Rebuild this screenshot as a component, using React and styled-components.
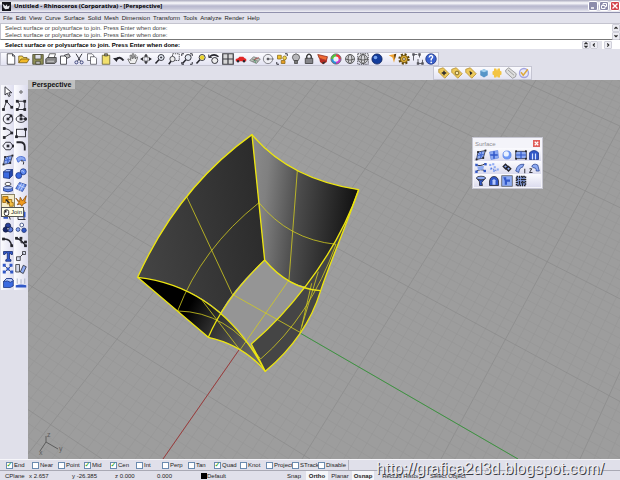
import React, { useState } from 'react';
import styled, { createGlobalStyle } from 'styled-components';

const MENUS = ['File', 'Edit', 'View', 'Curve', 'Surface', 'Solid', 'Mesh', 'Dimension', 'Transform', 'Tools', 'Analyze', 'Render', 'Help'];

const MAIN_TOOLS = [
  'new', 'open', 'save', 'print', 'properties', 'cut', 'copy', 'paste',
  'undo', 'pan', 'rotate', 'zoom', 'zoomWindow', 'zoomExtents', 'zoomSelected', 'undoView',
  'viewports', 'car', 'cplane', 'circleCenter', 'selectAll', 'bulb', 'lock', 'layers',
  'colorWheel', 'globe', 'globeBox', 'render', 'spot', 'gear', 'dimension', 'help',
];

const TAG_TOOLS = ['tagMove', 'tagCircle', 'tagPoint', 'smallCube', 'star', 'tagEmpty', 'check'];

const SIDE_TOOLS = [
  'pointer', 'point', 'polyline', 'controlCurve', 'circle', 'ellipse', 'arc', 'rectangle',
  'polygon', 'fillet', 'surface', 'bend', 'cube', 'spheres', 'cylinder', 'mesh',
  'join', 'explode', 'trim', 'split', 'boolean', 'group', 'curveEdit', 'pointsOn',
  'text', 'move', 'array', 'align', 'solid', 'project',
];

const SURFACE_TOOLS = [
  'surface', 'patch', 'sphere', 'plane', 'extrude',
  'loft', 'scatter', 'network', 'sweep1', 'sweep2',
  'revolve', 'rail', 'heightfield', 'pointGrid',
];

const OSNAPS = ['End', 'Near', 'Point', 'Mid', 'Cen', 'Int', 'Perp', 'Tan', 'Quad', 'Knot', 'Project', 'STrack', 'Disable'];

const K = '#25252c';
const B = '#3158c8';
const L = '#8eabf3';

const line = { fill: 'none', stroke: K, strokeWidth: 1.2 };

const dots = (points, color = K, r = 1.2) =>
  points.map(([x, y]) => <rect key={`${x}-${y}`} x={x - r} y={y - r} width={r * 2} height={r * 2} fill={color} />);

const tag = (
  <path d="M1 3 L7 1 L15 9 L9 15 L1 7Z" fill="#ecc95c" stroke="#b28a2c" />
);

const lens = (
  <g {...line}>
    <circle cx="9.5" cy="6" r="4" fill="#e4e9f2" />
    <path d="M6.5 9 L2 14" strokeWidth="2" />
  </g>
);

const globe = (
  <g fill="none" stroke="#555" strokeWidth="1.2">
    <circle cx="8" cy="8" r="6" fill="#d8d8dc" />
    <ellipse cx="8" cy="8" rx="2.6" ry="6" />
    <path d="M2 8 Q8 11 14 8" />
  </g>
);

const ICONS = {
  new: <path d="M3 1 H10 L13 4 V15 H3Z M10 1 V4 H13" fill="#fff" stroke={K} />,
  open: <g stroke="#6f5410"><path d="M1 13 V4 H6 L7 6 H12 V8" fill="#f9d95a" /><path d="M1 13 L4 8 H15 L12 13Z" fill="#f2b927" /></g>,
  save: <g stroke="#43432c"><path d="M1 2 H15 V15 H1Z" fill="#8f8f55" /><path d="M4 2 H12 V8 H4Z" fill="#dfe0ea" /><path d="M5 11 H11 V15 H5Z" fill="#bbb" /></g>,
  print: <g stroke="#333"><path d="M4 7 L6 1 H14 L12 7Z" fill="#fff" /><path d="M1 8 L3 6 H15 V12 L13 14 H1Z" fill="#888" /><path d="M3 11 H12" stroke="#ddd" /></g>,
  properties: <g stroke={K} fill="#fff"><path d="M2 4 H10 V15 H2Z" /><path d="M7 3 L13 1 L15 5 L11 7 L9 5Z" fill="#bbb" /></g>,
  cut: <g {...line}><path d="M4 1 L10 11 M12 1 L6 11" /><circle cx="4.5" cy="12.5" r="2" stroke="#313a74" /><circle cx="11.5" cy="12.5" r="2" stroke="#313a74" /></g>,
  copy: <g fill="#fff" stroke="#4d4d55"><path d="M2 1 H8 L10 3 V10 H2Z" /><path d="M6 5 H12 L14 7 V15 H6Z" /></g>,
  paste: <g stroke="#55502c"><path d="M3 3 H13 V15 H3Z" fill="#f2e06c" /><path d="M6 1 H10 V4 H6Z" fill="#888" /></g>,
  undo: <g><path d="M4 9 Q9 3 14 10" fill="none" stroke={K} strokeWidth="2.6" /><path d="M0 7 L7 6 L5 12Z" fill={K} /></g>,
  pan: <path d="M4 14 L1 8 L3 8 L5 10 L4 3 L6 3 L7 8 L7 1 L9 1 L9 7 L11 2 L12 3 L11 8 L14 5 L14 7 L11 14Z" fill="#eee" stroke="#555" />,
  rotate: <g strokeWidth="1"><ellipse cx="8" cy="8" rx="6.5" ry="2.6" fill="none" stroke="#777" /><ellipse cx="8" cy="8" rx="2.6" ry="6.5" fill="none" stroke="#888" /><path d="M8 1 L6 5 H10Z M8 15 L6 11 H10Z M0 8 L4 6 V10Z M16 8 L12 6 V10Z" fill={K} /></g>,
  zoom: <g>{lens}<path d="M8 6 H11 M9.5 4.5 V7.5" stroke={K} /></g>,
  zoomWindow: <g><rect x="6" y="1" width="9" height="9" fill="none" stroke={K} strokeDasharray="2 1" /><circle cx="6" cy="8" r="3.5" fill="#eee" stroke={K} /><path d="M4 11 L1 15" stroke={K} strokeWidth="2" /></g>,
  zoomExtents: <g>{lens}<path d="M1 4 V1 H4 M12 1 H15 V4 M15 12 V15 H12 M4 15 H1 V12" {...line} /></g>,
  zoomSelected: <g>{lens}<circle cx="9.5" cy="6" r="3" fill="#ecd52c" /></g>,
  undoView: <g {...line}><circle cx="9" cy="10" r="4" fill="#eee" /><path d="M2 5 Q8 0 14 5" strokeWidth="2" /><path d="M1 2 V6 H5" /></g>,
  viewports: <path d="M1 1 H15 V15 H1Z M8 1 V15 M1 8 H15" fill="#d7d7d7" stroke="#3c3c42" strokeWidth="1.6" />,
  car: <g><path d="M1 8 L4 7 L6 5 H11 L13 7 L15 8 V11 H1Z" fill="#e12626" /><circle cx="4" cy="11" r="1.6" fill={K} /><circle cx="12" cy="11" r="1.6" fill={K} /></g>,
  cplane: <g fill="none" stroke="#777"><path d="M1 10 L6 5 L15 8 L10 14Z M4 8 L12 11 M10 6 L5 12" fill="#b9c3b9" /><path d="M7 9 L13 6" stroke="#b33" /><path d="M7 9 L9 13" stroke="#385" /></g>,
  circleCenter: <g fill="none" stroke="#65656c"><circle cx="8" cy="8" r="6.2" fill="#efeff4" /><circle cx="8" cy="8" r="1.4" fill={K} /><path d="M8 8 H16" /></g>,
  selectAll: <g><path d="M1 15 V12 M1 15 H4 M12 1 H15 V4" {...line} /><path d="M2 3 H7 V8 H2Z" fill="#efc22e" stroke="#8b6a14" /><circle cx="11.5" cy="6.5" r="2.5" fill="#f2d651" stroke="#8b6a14" /><path d="M7 10 H12 V14 H7Z" fill="#e59b23" stroke="#8b6a14" /></g>,
  bulb: <g stroke="#444"><path d="M5 10 Q2 6 4 3 Q8 -1 12 3 Q14 6 11 10Z" fill="#b7b7ba" /><path d="M6 10 H10 V14 H6Z" fill="#777" /></g>,
  lock: <g stroke="#333"><path d="M5 8 V4 Q8 -1 11 4 V8" fill="none" strokeWidth="1.8" /><path d="M3 7 H13 V14 H3Z" fill="#85858a" /></g>,
  layers: <g><path d="M1 2 L14 5 L12 10 L3 7Z" fill="#f06a35" stroke="#882715" /><path d="M3 7 L12 10 L14 6 L13 12 L8 15 L4 12Z" fill="#b52a22" /><path d="M6 13 L12 11 L9 15Z" fill="#333" /></g>,
  colorWheel: <g fill="none" strokeWidth="3"><path d="M8 3 A5 5 0 0 1 13 8" stroke="#ef3939" /><path d="M13 8 A5 5 0 0 1 8 13" stroke="#c53ad0" /><path d="M8 13 A5 5 0 0 1 3 8" stroke="#2792de" /><path d="M3 8 A5 5 0 0 1 8 3" stroke="#53c83b" /><circle cx="8" cy="8" r="6.8" stroke="#333" strokeWidth="0.8" /></g>,
  globe,
  globeBox: <g>{globe}<rect x="1" y="1" width="14" height="14" fill="none" stroke={K} strokeDasharray="2 1" /></g>,
  render: <g><circle cx="8" cy="8" r="6.8" fill="#133c9c" /><circle cx="8" cy="8" r="6.8" fill="none" stroke="#0b1d55" /><circle cx="6" cy="6" r="2.4" fill="#79a4ef" /></g>,
  spot: <g><path d="M5 3 L15 1 L12 13 L10 6Z" fill="#efa332" /><path d="M12 2 L15 1 L13 9Z" fill="#5b3c12" /></g>,
  gear: <g><circle cx="8" cy="8" r="5.6" fill="none" stroke="#5c4308" strokeWidth="4" strokeDasharray="2.4 2" /><circle cx="8" cy="8" r="5" fill="#d9ab35" stroke="#5c4308" /><circle cx="8" cy="8" r="1.8" fill="#fff" stroke="#5c4308" /></g>,
  dimension: <g {...line} stroke="#55555c"><path d="M7 2 H2 V10 M10 2 V6 M8 8 V14 H14 V9" />{dots([[2, 2], [10, 2], [8, 14], [14, 14]], '#55555c', 1)}</g>,
  help: <g><circle cx="8" cy="8" r="7" fill="#3960cf" stroke="#20337a" /><path d="M5.5 6 Q6 3 8.5 3.3 Q12 5 8.3 8 V10" fill="none" stroke="#fff" strokeWidth="1.9" /><circle cx="8.3" cy="12.4" r="1.2" fill="#fff" /></g>,

  tagMove: <g>{tag}<path d="M5 8 H11 M8 5 V11" stroke={K} strokeWidth="1.8" /></g>,
  tagCircle: <g>{tag}<circle cx="8" cy="8" r="2.5" fill="#f8e8ac" stroke="#5c4308" /></g>,
  tagPoint: <g>{tag}<path d="M6 5 L10 8 L7 11Z" fill={K} /></g>,
  smallCube: <g><path d="M3 5 L8 3 L13 5 V11 L8 14 L3 11Z" fill="#5795c8" /><path d="M3 5 L8 3 L13 5 L8 7Z" fill="#a6d1ee" /></g>,
  star: <path d="M8 5 L9 2 H12 V5 L14 6 V10 L12 11 V14 H9 L8 12 L7 14 H4 V11 L2 10 V6 L4 5 V2 H7Z" fill="#f3c443" />,
  tagEmpty: <path d="M1 4 L5 1 L15 9 L14 13 L10 15 L1 7Z M4 4 L12 11" fill="#dedede" stroke="#888" />,
  check: <g fill="none"><circle cx="8" cy="8" r="6" fill="#e6e6f8" stroke="#a4a4e0" strokeWidth="1.8" /><path d="M4 7 L7 11 L13 3" stroke="#dda93c" strokeWidth="2" /></g>,

  pointer: <path d="M4 1 V12 L7 9.5 L9 14 L11 13 L9 9 H13Z" fill="#fff" stroke={K} strokeWidth="1.2" />,
  point: <circle cx="8" cy="8" r="1.6" fill="#fff" stroke={K} />,
  polyline: <g {...line}><path d="M2 14 L6 3 L13 11" />{dots([[2, 14], [6, 3], [13, 11]])}</g>,
  controlCurve: <g {...line}><path d="M3 3 H13 V14 H3 Q9 8 3 3" />{dots([[3, 3], [13, 3], [3, 14], [13, 14]])}</g>,
  circle: <g {...line}><circle cx="8" cy="8" r="6.3" /><path d="M8 8 L12 4" />{dots([[8, 8], [12, 4]])}</g>,
  ellipse: <g {...line}><ellipse cx="8" cy="8" rx="6.5" ry="4.5" /><path d="M8 3 V8 H14" />{dots([[8, 8], [8, 3], [14, 8]])}</g>,
  arc: <g {...line}><path d="M3 2 Q11 3 13 8 L3 14" />{dots([[3, 2], [13, 8], [3, 14]])}</g>,
  rectangle: <g {...line}><rect x="2" y="3" width="12" height="10" />{dots([[2, 13], [14, 3]])}</g>,
  polygon: <g {...line}><path d="M5 3 H11 L15 8 L11 13 H5 L1 8Z" />{dots([[8, 8], [15, 8]])}</g>,
  fillet: <g fill="none"><path d="M2 3 H7 Q13 3 13 9 V14" stroke={K} strokeWidth="2.4" /></g>,
  surface: <g><path d="M4 4 L14 2 L11 12 L2 14Z" fill={L} stroke={K} /><path d="M4 4 L11 12 M3 9 L12 7 M9 3 L7 13" stroke={B} />{dots([[4, 4], [14, 2], [11, 12], [2, 14]])}</g>,
  bend: <g><path d="M2 6 Q7 1 13 5 L14 9 L8 8 L4 11Z" fill={L} stroke={B} /><path d="M8 9 Q13 9 11 14" {...line} /></g>,
  cube: <g stroke="#18317e"><path d="M2 5 L10 5 V14 L2 13Z" fill="#3b6ae0" /><path d="M2 5 L6 2 H14 L10 5Z" fill="#a9c0fa" /><path d="M10 5 L14 2 V10 L10 14Z" fill="#2447ab" /></g>,
  spheres: <g stroke="#18317e"><circle cx="11" cy="5" r="4" fill="#5c86ec" /><circle cx="5" cy="10" r="4" fill="#3b6ae0" /><path d="M8 4 Q11 2 12 6" stroke="#cbd8fd" fill="none" /></g>,
  cylinder: <g stroke="#18317e"><path d="M2 9 V13 Q8 16 14 13 V9" fill="#5c86ec" /><ellipse cx="8" cy="9" rx="6" ry="2" fill="#c6d5fc" /><ellipse cx="8" cy="4" rx="4" ry="2.2" fill="#fff" stroke={K} /></g>,
  mesh: <g stroke="#28479e"><path d="M6 2 L15 5 L10 14 L1 10Z" fill="#6c92ee" /><path d="M9 3 L4 12 M12 4 L7 13 M4 5 L13 9" stroke="#d3defc" /></g>,
  join: <g stroke="#8b5c05"><path d="M1 2 H8 V7 H5 V10 H1Z" fill="#f3a823" /><path d="M8 6 H13 V10 H15 V15 H10 V12 H7 V9 H8Z" fill="#f6c044" /><path d="M5 6 L10 11" stroke={K} strokeWidth="1.8" /></g>,
  explode: <path d="M1 4 L6 9 L7 3 L10 8 L15 1 L13 9 L15 10 L11 12 L9 15 L7 12 L3 13 L5 10Z" fill="#f09b20" stroke="#8b4b05" />,
  trim: <g><path d="M7 2 L11 14" {...line} /><path d="M2 8 H8 V13 H2Z" fill={B} /></g>,
  split: <g><path d="M4 2 V14 M12 2 V14 M4 14 H14" {...line} /><path d="M6 4 H14 V11 H6Z" fill={B} /></g>,
  boolean: <g stroke="#101940"><circle cx="8" cy="5" r="3.5" fill="#27409b" /><circle cx="5" cy="10" r="3.5" fill="#17266b" /><circle cx="11" cy="10" r="3.5" fill="#5d7bda" /><circle cx="8" cy="9" r="1.5" fill="#fff" /></g>,
  group: <g stroke="#22346f"><circle cx="9" cy="4" r="2.5" fill="#fff" /><circle cx="4" cy="10" r="2.5" fill={L} /><circle cx="12" cy="11" r="3" fill={B} /></g>,
  curveEdit: <g {...line}><path d="M2 4 Q11 3 13 13" strokeWidth="2" />{dots([[2, 4], [13, 13]])}</g>,
  pointsOn: <g {...line}><path d="M2 3 Q9 5 14 13" strokeWidth="1.8" /><path d="M8 3 V9 H14" />{dots([[2, 3], [8, 3], [14, 13], [14, 8]])}</g>,
  text: <path d="M2 2 H14 V6 H12 L11 4 H10 V12 L12 13 V15 H5 V13 L7 12 V4 H5 L4 6 H2Z" fill={B} stroke="#14286c" />,
  move: <g><path d="M2 9 H7 V14 H2Z M10 2 H14 V6 H10Z" fill="#d4d9ea" stroke={K} /><path d="M7 9 L11 5" {...line} /></g>,
  array: <g><path d="M3 3 L13 13 M13 3 L3 13" stroke={K} />{dots([[3, 3], [12, 3], [8, 8], [3, 12], [13, 12]], B, 2)}</g>,
  align: <g stroke={K}><path d="M1 2 H6 V12 H1Z" fill="#d4d9ea" /><path d="M7 12 L11 3 L15 5 L11 14Z" fill={L} /></g>,
  solid: <g stroke="#18317e"><path d="M2 6 L6 2 H13 L15 5 V12 L11 14 H2Z" fill="#3b6ae0" /><path d="M2 6 Q8 4 11 7 L15 5 L13 2 H6Z" fill="#b9cbfb" /></g>,
  project: <g><path d="M3 2 V9 M8 3 V9 M13 2 V9" stroke="#9ba4bb" /><path d="M1 11 Q8 9 15 11 V14 H1Z" fill={B} /></g>,

  patch: <g><path d="M2 4 L13 2 L14 12 L4 14Z" fill={L} stroke="#6c8de0" /><path d="M8 3 V13 M3 8 H13" stroke={B} strokeWidth="2" /></g>,
  sphere: <g><circle cx="8" cy="8" r="5.4" fill="#6e98f7" stroke="#5c86e6" /><circle cx="7" cy="6.5" r="3.5" fill="#eaf2ff" /></g>,
  plane: <g><rect x="1" y="3" width="14" height="10" fill={L} stroke={K} /><path d="M8 3 V13 M1 8 H15" stroke={B} strokeWidth="1.6" />{dots([[1.5, 3], [14.5, 3], [1.5, 13], [14.5, 13]])}</g>,
  extrude: <g stroke="#1b3385"><path d="M2 5 V14 H14 V5 Q8 -1 2 5Z" fill={B} /><path d="M6 6 V14 M10 6 V14" stroke="#d5e1ff" strokeWidth="1.6" /></g>,
  loft: <g><path d="M1 3 Q6 7 14 2 M1 13 Q7 8 14 12" {...line} /><path d="M3 6 L12 5 L11 10 L4 11Z" fill={L} />{dots([[2, 4], [2, 13], [14, 3], [13, 12]], B, 1.6)}</g>,
  scatter: <g>{dots([[3, 4], [7, 3], [4, 9], [9, 7], [13, 10], [8, 12]], L, 1.4)}<path d="M4 8 L12 12" stroke={B} strokeDasharray="2 1" /></g>,
  network: <g fill={L} stroke={K} strokeWidth="1.8"><path d="M6 3 L9 6 L6 9 L3 6Z M10 6 L13 9 L10 12 L7 9Z" /></g>,
  sweep1: <g><path d="M1 12 Q3 2 12 3 L10 7 Q6 7 5 14Z" fill={L} stroke="#25408f" /><path d="M13 9 V15" {...line} /></g>,
  sweep2: <g><path d="M5 6 Q7 1 13 4 L15 12 H11 Q11 7 8 8Z" fill={L} stroke="#25408f" /><path d="M2 9 H5 L2 14 H6" {...line} /></g>,
  revolve: <g stroke={K}><path d="M2 4 Q8 9 14 4 L9 10 L10 14 H6 V9Z" fill={B} /><ellipse cx="8" cy="4" rx="6" ry="2.4" fill={L} /></g>,
  rail: <g stroke={K}><path d="M2 14 V8 Q3 2 8 2 Q13 2 14 8 V14Z" fill={B} /><path d="M6 13 V7 Q8 4 10 7 V13Z" fill="#b8cafb" stroke="none" /></g>,
  heightfield: <g><rect x="1" y="1" width="14" height="14" fill={L} stroke="#555" /><path d="M3 3 H7 V6 H12 V9 H8 V13 H5 V8Z" fill={B} /></g>,
  pointGrid: <g><rect x="2" y="2" width="12" height="12" fill={L} /><path d="M2 2 H14 V14 H2Z M6 2 V14 M10 2 V14 M2 6 H14 M2 10 H14" fill="none" stroke={K} strokeWidth="2" strokeDasharray="2 1" /></g>,
};

function Tool({ name }) {
  return (
    <ToolButton type="button" aria-label={name} $active={name === 'join'}>
      <svg viewBox="0 0 16 16">{ICONS[name]}</svg>
    </ToolButton>
  );
}

// one direction of the ground grid, evenly spaced along the top and the bottom edge
function GridLines({ top, bottom, topStep, bottomStep, from, to }) {
  const lines = [];
  for (let i = from; i <= to; i++) {
    lines.push(
      <line
        key={i}
        x1={top + (topStep * i) / 10}
        y1="0"
        x2={bottom + (bottomStep * i) / 10}
        y2="379"
        stroke={i % 10 === 0 ? '#8a8a8a' : '#959595'}
        strokeWidth={i % 10 === 0 ? 0.7 : 0.6}
      />
    );
  }
  return <g>{lines}</g>;
}

function Scene() {
  return (
    <SceneSvg viewBox="0 0 592 379" preserveAspectRatio="xMinYMin slice">
      <defs>
        <linearGradient id="leftWall" x1="0" x2="1" y1="0.6" y2="0.4">
          <stop offset="0" stopColor="#444" />
          <stop offset="1" stopColor="#2b2b2b" />
        </linearGradient>
        <linearGradient id="backWall" x1="0" x2="1" y1="0" y2="0.15">
          <stop offset="0" stopColor="#8c8c8c" />
          <stop offset="0.18" stopColor="#808080" />
          <stop offset="0.5" stopColor="#4a4a4a" />
          <stop offset="1" stopColor="#141414" />
        </linearGradient>
        <linearGradient id="frontWall" x1="0" x2="1" y1="0.3" y2="0.7">
          <stop offset="0.35" stopColor="#000" />
          <stop offset="0.6" stopColor="#333" />
          <stop offset="1" stopColor="#6a6a6a" />
        </linearGradient>
      </defs>
      <GridLines top={399} bottom={135} topStep={109} bottomStep={139} from={-50} to={40} />
      <GridLines top={-165} bottom={490} topStep={164} bottomStep={208} from={-30} to={50} />
      <line x1="213" y1="267" x2="135" y2="379" stroke="#9c3b3b" />
      <line x1="272" y1="253" x2="490" y2="379" stroke="#3d9440" />

      <g transform="translate(92 40) scale(0.3333)">
        <path d="M53 472 Q175 202 396 44 L434 420 Q345 500 302 577 Q200 490 53 472Z" fill="url(#leftWall)" />
        <path d="M396 44 Q508 177 716 209 C690 300 630 410 558 500 Q490 490 434 420Z" fill="url(#backWall)" />
        <path d="M434 420 Q490 490 558 500 Q480 600 394 672 Q350 615 302 577 Q345 500 434 420Z" fill="#959595" />
        <path d="M53 472 Q300 500 436 754 Q370 675 265 652Z" fill="url(#frontWall)" />
        <path d="M394 672 C480 600 640 430 716 209 C690 290 640 400 602 512 Q560 650 436 754Z" fill="#454545" />
        <g fill="none" stroke="#d2cb20" strokeWidth="2.4">
          <path d="M200 230 L337 523 L540 637 M417 248 Q245 385 173 573" />
          <path d="M532 152 L507 480 L360 690 M417 248 Q505 358 648 373" />
          <path d="M173 573 Q320 575 422 717 Q570 590 648 373" />
          <path d="M247 542 L360 690 M595 455 L540 637 M575 490 L545 620" />
        </g>
        <g fill="none" stroke="#ece511" strokeWidth="4" strokeLinejoin="round">
          <path d="M53 472 Q175 202 396 44 Q508 177 716 209 C690 290 640 400 602 512 Q560 650 436 754 Q370 675 265 652Z" />
          <path d="M53 472 Q300 500 436 754 L394 672 C480 600 640 430 716 209" />
          <path d="M396 44 L434 420 Q505 505 602 512 M434 420 Q315 535 265 652" />
        </g>
      </g>

      <g fill="none" stroke="#5c5c5c">
        <path d="M18 362 V356 M18 362 L30 369 M18 362 L12 371" />
      </g>
      <g fill="#5c5c5c" fontFamily="Liberation Sans, sans-serif" fontSize="7">
        <text x="19" y="357">z</text>
        <text x="31" y="371">y</text>
        <text x="11" y="375">x</text>
      </g>
    </SceneSvg>
  );
}

function App() {
  const [snaps, setSnaps] = useState(['End', 'Mid', 'Cen', 'Quad']);
  const [command, setCommand] = useState('');

  const toggleSnap = (name) => {
    setSnaps(snaps.includes(name) ? snaps.filter((s) => s !== name) : [...snaps, name]);
  };

  return (
    <Window>
      <GlobalStyle />
      <TitleBar>
        <svg viewBox="0 0 16 16" width="9" height="9">
          <rect width="16" height="16" fill="#15151c" />
          <path d="M1 3 L6 7 L9 4 L9 8 L14 6 L12 12 L6 13 L3 10Z" fill="#e6e6ec" />
        </svg>
        <Title>Untitled - Rhinoceros (Corporativa) - [Perspective]</Title>
        <CaptionButton type="button" aria-label="Minimize">
          <svg viewBox="0 0 8 8"><path d="M2 6 H5" stroke="#fff" strokeWidth="1.5" /></svg>
        </CaptionButton>
        <CaptionButton type="button" aria-label="Restore">
          <svg viewBox="0 0 8 8"><path d="M3 3 V1.5 H6.5 V4.5 H5 M1.5 3.5 H5 V6.5 H1.5Z" fill="none" stroke="#fff" /></svg>
        </CaptionButton>
        <CaptionButton type="button" aria-label="Close" $bg="#d4444c">
          <svg viewBox="0 0 8 8"><path d="M1.5 1.5 L6.5 6.5 M6.5 1.5 L1.5 6.5" stroke="#fff" strokeWidth="1.4" /></svg>
        </CaptionButton>
      </TitleBar>

      <MenuBar>
        {MENUS.map((menu) => <MenuItem type="button" key={menu}>{menu}</MenuItem>)}
      </MenuBar>

      <History>
        <div>
          <p>Select surface or polysurface to join. Press Enter when done:</p>
          <p>Select surface or polysurface to join. Press Enter when done:</p>
        </div>
        <ScrollButtons>
          <ScrollButton type="button" aria-label="Scroll up"><svg viewBox="0 0 8 8"><path d="M2 5 L4 3 L6 5" /></svg></ScrollButton>
          <ScrollButton type="button" aria-label="Scroll down"><svg viewBox="0 0 8 8"><path d="M2 3 L4 5 L6 3" /></svg></ScrollButton>
        </ScrollButtons>
      </History>
      <Prompt>
        <label htmlFor="command">Select surface or polysurface to join. Press Enter when done:</label>
        <input id="command" value={command} onChange={(e) => setCommand(e.target.value)} />
        <ScrollButton type="button" aria-label="Resize"><svg viewBox="0 0 8 8"><path d="M2 3 L4 1 L6 3 M2 5 L4 7 L6 5" /></svg></ScrollButton>
        <ScrollButton type="button" aria-label="Scroll left"><svg viewBox="0 0 8 8"><path d="M5 2 L3 4 L5 6" /></svg></ScrollButton>
        <Thumb />
        <ScrollButton type="button" aria-label="Scroll right"><svg viewBox="0 0 8 8"><path d="M3 2 L5 4 L3 6" /></svg></ScrollButton>
      </Prompt>

      <ToolArea>
        <MainToolbar>{MAIN_TOOLS.map((name) => <Tool key={name} name={name} />)}</MainToolbar>
        <TagToolbar>{TAG_TOOLS.map((name) => <Tool key={name} name={name} />)}</TagToolbar>
      </ToolArea>

      <Workspace>
        <Sidebar>
          <SideTools>{SIDE_TOOLS.map((name) => <Tool key={name} name={name} />)}</SideTools>
          <Tooltip>
            <svg viewBox="0 0 8 8" width="7" height="7">
              <rect x="1.5" y="1" width="5" height="6.5" rx="2" fill="#fff" stroke="#222" />
              <rect x="2" y="1.5" width="2" height="2.5" fill="#222" />
            </svg>
            Join
          </Tooltip>
        </Sidebar>
        <Viewport>
          <Scene />
          <ViewLabel>Perspective</ViewLabel>
          <Palette>
            <PaletteTitle>
              Surface
              <PaletteClose type="button" aria-label="Close palette">
                <svg viewBox="0 0 8 8"><path d="M2 2 L6 6 M6 2 L2 6" stroke="#fff" strokeWidth="1.4" /></svg>
              </PaletteClose>
            </PaletteTitle>
            <PaletteTools>{SURFACE_TOOLS.map((name) => <Tool key={name} name={name} />)}</PaletteTools>
          </Palette>
        </Viewport>
      </Workspace>

      <Footer>
        <SnapBar>
          {OSNAPS.map((name) => (
            <Snap key={name}>
              <input type="checkbox" checked={snaps.includes(name)} onChange={() => toggleSnap(name)} />
              {name}
            </Snap>
          ))}
        </SnapBar>
        <StatusBar>
          <Cell $width={24}>CPlane</Cell>
          <Cell $width={43}>x 2.657</Cell>
          <Cell $width={43}>y -26.385</Cell>
          <Cell $width={42}>z 0.000</Cell>
          <Cell $width={44}>0.000</Cell>
          <Cell $width={81}><Swatch />Default</Cell>
          <Pane type="button" $width={24}>Snap</Pane>
          <Pane type="button" $width={22} $on>Ortho</Pane>
          <Pane type="button" $width={24}>Planar</Pane>
          <Pane type="button" $width={22} $on>Osnap</Pane>
          <Pane type="button" $width={56}>Record History</Pane>
          <Cell $width={60}>Select Object</Cell>
        </StatusBar>
        <SiteLink href="http://grafica2d3d.blogspot.com/">http://grafica2d3d.blogspot.com/</SiteLink>
      </Footer>
    </Window>
  );
}

export default App;

const GlobalStyle = createGlobalStyle`
  * {
    box-sizing: border-box;
  }

  body {
    margin: 0;
    font-family: "Liberation Sans", Arial, sans-serif;
    font-size: 6px;
    color: #222;
  }

  button,
  input {
    margin: 0;
    padding: 0;
    border: 0;
    font: inherit;
    color: inherit;
    background: none;
  }

  p {
    margin: 0;
  }

  svg {
    display: block;
  }
`;

const Window = styled.div`
  display: flex;
  flex-direction: column;
  min-height: 100vh;
  background: #e0e0ea;
`;

const TitleBar = styled.header`
  display: flex;
  align-items: center;
  gap: 1px;
  height: 13px;
  padding-left: 2px;
  border-bottom: 1px solid #9191ad;
  background: linear-gradient(#a9a9bd, #fbfbfd 25%, #b7b7cd 50%, #c9c9da 75%, #f0f0f6);
`;

const Title = styled.h1`
  flex: 1;
  margin: 0 0 0 2px;
  font-family: "Open Sans", sans-serif;
  font-size: 6px;
  font-weight: 700;
  line-height: 12px;
  color: #000;
`;

const CaptionButton = styled.button`
  width: 10px;
  height: 10px;
  border: 1px solid #fff;
  border-radius: 2px;
  background: ${(props) => props.$bg || '#8c8cab'};
`;

const MenuBar = styled.nav`
  display: flex;
  gap: 3px;
  height: 10px;
  padding-left: 3px;
  background: #e2e2ec;
`;

const MenuItem = styled.button`
  line-height: 9px;
`;

const History = styled.section`
  display: flex;
  justify-content: space-between;
  height: 17px;
  padding-left: 4px;
  border-top: 1px solid #c4c4cf;
  border-bottom: 1px solid #777;
  border-left: 1px solid #c4c4cf;
  background: #fff;
  line-height: 7px;
  color: #444;

  p {
    padding-top: 1px;
    height: 7px;
  }
`;

const ScrollButtons = styled.div`
  display: flex;
  flex-direction: column;
`;

const ScrollButton = styled.button`
  width: 8px;
  height: 8px;
  border: 1px solid #d0d0da;
  border-radius: 1px;
  background: #ededf3;

  path {
    fill: none;
    stroke: #222;
    stroke-width: 1.5;
  }
`;

const Prompt = styled.section`
  display: flex;
  align-items: center;
  height: 9px;
  padding: 0 8px 0 5px;
  background: #fff;
  font-weight: 700;
  line-height: 8px;
  color: #000;

  input {
    flex: 1;
    min-width: 0;
    height: 8px;
    outline: none;
  }
`;

const Thumb = styled.span`
  width: 6px;
  height: 8px;
  background: #e4e4ec;
  border-right: 2px solid #fff;
`;

const ToolArea = styled.div`
  display: flex;
  flex-direction: column;
  padding-top: 3px;
`;

const Toolbar = styled.div`
  display: grid;
  grid-auto-flow: column;
  grid-auto-columns: 1fr;
  align-items: center;
  height: 14px;
  background: linear-gradient(#fbfbfe, #e3e3f2);
  border: 1px solid #c5c5d2;
`;

const MainToolbar = styled(Toolbar)`
  width: 439px;
  padding-left: 3px;
`;

const TagToolbar = styled(Toolbar)`
  width: 99px;
  margin-left: 433px;
  padding-left: 3px;
`;

const ToolButton = styled.button`
  display: flex;
  align-items: center;
  justify-content: center;
  background: ${(props) => (props.$active ? '#f6ecc7' : 'none')};
  box-shadow: ${(props) => (props.$active ? 'inset 0 0 0 1px #8b8468' : 'none')};

  svg {
    width: 12px;
    height: 12px;
  }
`;

const Workspace = styled.main`
  flex: 1;
  display: flex;
`;

const Sidebar = styled.aside`
  position: relative;
  width: 28px;
  padding: 5px 0 0 1px;
`;

const SideTools = styled.div`
  display: grid;
  grid-template-columns: 1fr 1fr;
  grid-template-rows: repeat(15, 1fr);
  height: 205px;
  background: linear-gradient(90deg, #fbfbfe, #dcdcee 50%, #fbfbfe 50%, #dcdcee);
`;

const Tooltip = styled.div`
  position: absolute;
  left: 1px;
  top: 127px;
  display: flex;
  align-items: center;
  gap: 1px;
  height: 10px;
  padding: 0 1px;
  border: 1px solid #555;
  background: #fffee6;
`;

const Viewport = styled.section`
  position: relative;
  flex: 1;
  display: flex;
  overflow: hidden;
  background: #9d9d9d;
`;

const SceneSvg = styled.svg`
  width: 100%;
  height: auto;
`;

const ViewLabel = styled.h2`
  position: absolute;
  top: 0;
  left: 0;
  margin: 0;
  padding: 0 4px;
  background: #c0c0c0;
  font-size: 7px;
  font-weight: 700;
  line-height: 9px;
  color: #111;
`;

const Palette = styled.div`
  position: absolute;
  top: 57px;
  left: 444px;
  width: 71px;
  padding: 1px;
  border: 1px solid #c7c7d2;
  background: #f4f4fa;
`;

const PaletteTitle = styled.div`
  display: flex;
  align-items: center;
  justify-content: space-between;
  height: 9px;
  padding: 0 1px;
  font-size: 6px;
  color: #8e8e94;
`;

const PaletteClose = styled.button`
  width: 7px;
  height: 7px;
  background: #e0605c;
`;

const PaletteTools = styled.div`
  display: grid;
  grid-template-columns: repeat(5, 1fr);
  grid-auto-rows: 13px;
  background: linear-gradient(#fbfbfe, #dcdcee 33%, #fbfbfe 34%, #dcdcee 66%, #fbfbfe 67%, #dcdcee);
`;

const Footer = styled.footer`
  position: relative;
  border-top: 1px solid #f6f6fa;
`;

const SnapBar = styled.div`
  display: grid;
  grid-template-columns: repeat(13, 26px);
  align-items: center;
  width: 349px;
  height: 10px;
  padding-left: 6px;
  border-right: 1px solid #b4b4c0;
`;

const Snap = styled.label`
  display: flex;
  align-items: center;
  gap: 1px;
  white-space: nowrap;

  input {
    appearance: none;
    display: flex;
    align-items: center;
    justify-content: center;
    flex: none;
    width: 7px;
    height: 7px;
    border: 1px solid #6b8bb0;
    background: #fff;
  }

  input:checked::before {
    content: '✓';
    font: 700 7px/5px "DejaVu Sans", sans-serif;
    color: #119a11;
  }
`;

const StatusBar = styled.div`
  display: flex;
  align-items: center;
  height: 10px;
  padding-left: 5px;
  border-top: 1px solid #a9a9b4;
  white-space: nowrap;
`;

const Cell = styled.span`
  display: flex;
  align-items: center;
  width: ${(props) => props.$width}px;
`;

const Pane = styled.button`
  width: ${(props) => props.$width}px;
  height: 9px;
  font-weight: ${(props) => (props.$on ? 700 : 400)};
  background: ${(props) => (props.$on ? '#f6f6fa' : 'none')};
`;

const Swatch = styled.i`
  width: 6px;
  height: 6px;
  background: #000;
`;

const SiteLink = styled.a`
  position: absolute;
  right: 16px;
  bottom: 2px;
  font-size: 16px;
  line-height: 18px;
  color: #ececf0;
  text-decoration: none;
  text-shadow: 1px 1px #3c3c42;
`;
